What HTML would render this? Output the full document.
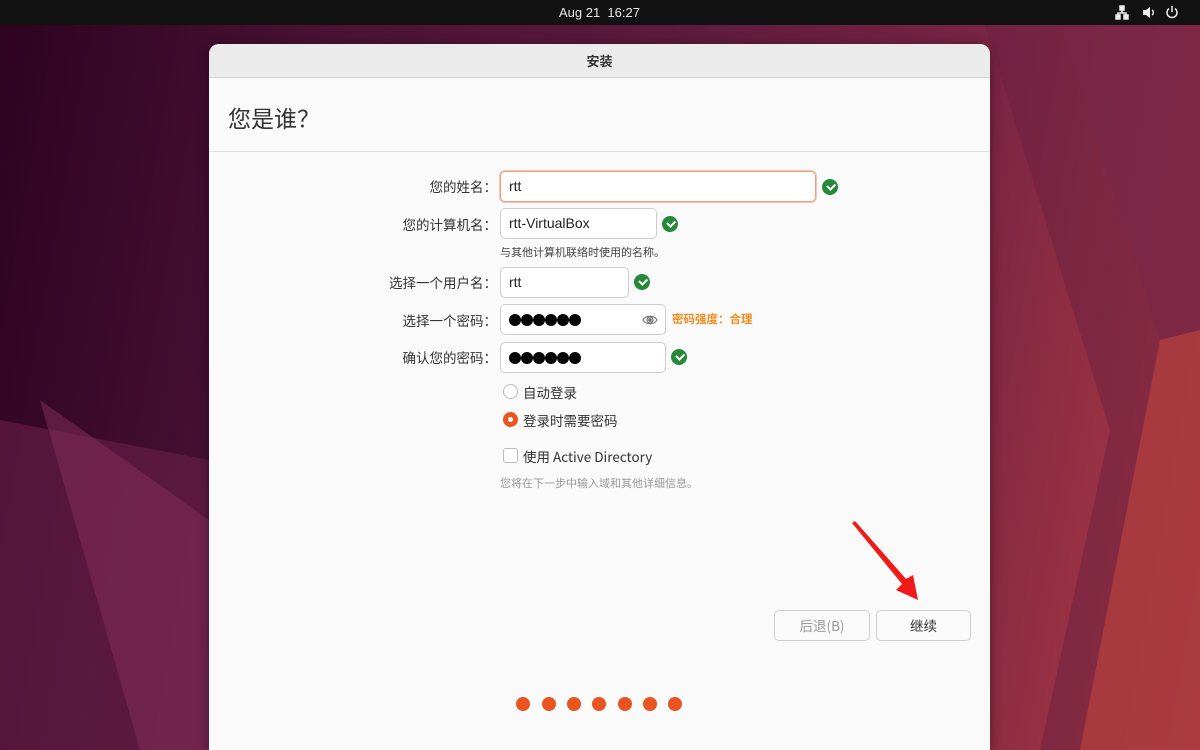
<!DOCTYPE html>
<html><head><meta charset="utf-8"><style>
*{margin:0;padding:0;box-sizing:border-box}
body{width:1200px;height:750px;overflow:hidden;position:relative;font-family:"Liberation Sans","Noto Sans CJK SC",sans-serif;background:linear-gradient(100deg,#2c0320 0%,#4a1234 25%,#5a1a3c 50%,#7a2444 75%,#b03c42 100%)}
.cjk{font-family:"Noto Sans CJK SC",sans-serif}
.bar{position:absolute;left:0;top:0;width:1200px;height:25px;background:#121212;color:#e8e8e8;font-size:13px}
.win{position:absolute;left:209px;top:44px;width:781px;height:706px;background:#fafafa;border-radius:10px 10px 0 0;overflow:hidden;box-shadow:0 2px 12px rgba(0,0,0,.4)}
.hd{height:34px;background:#ebebeb;border-bottom:1px solid #d0d0d0;text-align:center;line-height:34px;font-size:13px;font-weight:bold;color:#333}
.t{position:absolute;left:19px;top:56px;font-size:23px;color:#333;font-family:"Noto Sans CJK SC",sans-serif;line-height:34px}
.sep{position:absolute;left:0;top:107px;width:781px;height:1px;background:#e0e0e0}
.lb{position:absolute;right:493px;font-size:13.5px;color:#333;text-align:right;white-space:nowrap;font-family:"Noto Sans CJK SC",sans-serif;line-height:20px}
.in{position:absolute;left:291px;height:31px;background:#fff;border:1px solid #cdcdcd;border-radius:5px;font-size:14px;color:#222;padding-left:8px;line-height:29px}
.ck{position:absolute;width:16px;height:16px;border-radius:50%;background:#26893a}
.ck:after{content:"";position:absolute;left:4.5px;top:4px;width:6px;height:3.5px;border-left:2px solid #fff;border-bottom:2px solid #fff;transform:rotate(-45deg)}
.pd{position:absolute;top:9px;width:12px;height:12px;border-radius:50%;background:#000}
.sm{position:absolute;font-size:11px;color:#444;font-family:"Noto Sans CJK SC",sans-serif}
.btn{position:absolute;top:566px;height:31px;border:1px solid #cfcfcf;border-radius:5px;background:#fafafa;text-align:center;line-height:29px;font-size:13.5px}
.dot{position:absolute;top:653px;width:14px;height:14px;border-radius:50%;background:#e95420}
</style></head><body>
<svg style="position:absolute;left:0;top:0" width="1200" height="750">
<polygon points="985,25 1200,25 1200,750 1040,750 1110,430" fill="#6a2042" opacity=".5"/>
<polygon points="1060,25 1200,25 1200,330 1160,340" fill="#7a2648" opacity=".6"/>
<polygon points="1160,340 1200,330 1200,750 1080,750" fill="#c0443e" opacity=".6"/>
<polygon points="0,420 209,460 209,750 0,750" fill="#6a2048" opacity=".6"/>
<polygon points="40,400 209,520 209,750 140,750" fill="#85305a" opacity=".5"/>
</svg>
<div class="bar"><span style="position:absolute;left:559px;top:5px">Aug 21&nbsp; 16:27</span>
<svg style="position:absolute;left:1115px;top:5px" width="70" height="15" fill="none" stroke="#eee" stroke-width="1.5">
<rect x="5" y="1" width="4" height="4" fill="#eee"/><rect x="1" y="10" width="4" height="4" fill="#eee"/><rect x="9" y="10" width="4" height="4" fill="#eee"/><path d="M7 5v3M3 10V8h8v2"/>
<path d="M28 5h3l4-3v11l-4-3h-3z" fill="#eee" stroke="none"/><path d="M37 5a3 3 0 0 1 0 5"/>
<path d="M57 1v6M54 3.5a5 5 0 1 0 6 0"/></svg></div>
<div class="win">
<div class="hd cjk">安装</div>
<div class="t">您是谁？</div>
<div class="sep"></div>
<div class="lb" style="top:132px">您的姓名：</div>
<div class="in" style="top:127px;width:316px;border:1px solid #f0a080;box-shadow:0 0 0 1px #f5c4b0">rtt</div>
<div class="ck" style="left:613px;top:135px"></div>
<div class="lb" style="top:170px">您的计算机名：</div>
<div class="in" style="top:164px;width:157px">rtt-VirtualBox</div>
<div class="ck" style="left:453px;top:172px"></div>
<div class="sm" style="left:291px;top:200px">与其他计算机联络时使用的名称。</div>
<div class="lb" style="top:228px">选择一个用户名：</div>
<div class="in" style="top:223px;width:129px">rtt</div>
<div class="ck" style="left:425px;top:230px"></div>
<div class="lb" style="top:266px">选择一个密码：</div>
<div class="in" style="top:260px;width:166px"><i class="pd" style="left:8px"></i><i class="pd" style="left:20px"></i><i class="pd" style="left:32px"></i><i class="pd" style="left:44px"></i><i class="pd" style="left:56px"></i><i class="pd" style="left:68px"></i>
<svg style="position:absolute;right:7px;top:7px" width="16" height="16" fill="none" stroke="#777" stroke-width="1.2"><path d="M1 8c3-5 11-5 14 0c-3 5-11 5-14 0z"/><circle cx="8" cy="8" r="3"/><circle cx="8" cy="8" r="1.3" fill="#777"/></svg></div>
<div class="cjk" style="position:absolute;left:463px;top:267px;font-size:11.5px;font-weight:bold;color:#f08c1c">密码强度：合理</div>
<div class="lb" style="top:303px">确认您的密码：</div>
<div class="in" style="top:298px;width:166px"><i class="pd" style="left:8px"></i><i class="pd" style="left:20px"></i><i class="pd" style="left:32px"></i><i class="pd" style="left:44px"></i><i class="pd" style="left:56px"></i><i class="pd" style="left:68px"></i></div>
<div class="ck" style="left:462px;top:305px"></div>
<div style="position:absolute;left:294px;top:340px;width:15px;height:15px;border:1px solid #bbb;border-radius:50%;background:#fff"></div>
<div class="cjk" style="position:absolute;left:314px;top:338px;font-size:13.5px;color:#333">自动登录</div>
<div style="position:absolute;left:294px;top:368px;width:15px;height:15px;border-radius:50%;background:#e95420"><div style="position:absolute;left:5px;top:5px;width:5px;height:5px;border-radius:50%;background:#fff"></div></div>
<div class="cjk" style="position:absolute;left:314px;top:366px;font-size:13.5px;color:#333">登录时需要密码</div>
<div style="position:absolute;left:294px;top:404px;width:15px;height:15px;border:1px solid #bbb;border-radius:3px;background:#fff"></div>
<div class="cjk" style="position:absolute;left:314px;top:402px;font-size:13.5px;color:#333">使用 Active Directory</div>
<div class="sm" style="left:291px;top:431px;color:#999">您将在下一步中输入域和其他详细信息。</div>
<div class="btn cjk" style="left:565px;width:96px;color:#999">后退(B)</div>
<div class="btn cjk" style="left:667px;width:95px;color:#333">继续</div>
<div class="dot" style="left:307px"></div><div class="dot" style="left:333px"></div><div class="dot" style="left:358px"></div><div class="dot" style="left:383px"></div><div class="dot" style="left:409px"></div><div class="dot" style="left:434px"></div><div class="dot" style="left:459px"></div>
</div>
<svg style="position:absolute;left:0;top:0" width="1200" height="750">
<polygon points="852,523 855,521 906,579 913,575 918,600 896,590 902,584" fill="#f01a1a"/>
</svg>
</body></html>
